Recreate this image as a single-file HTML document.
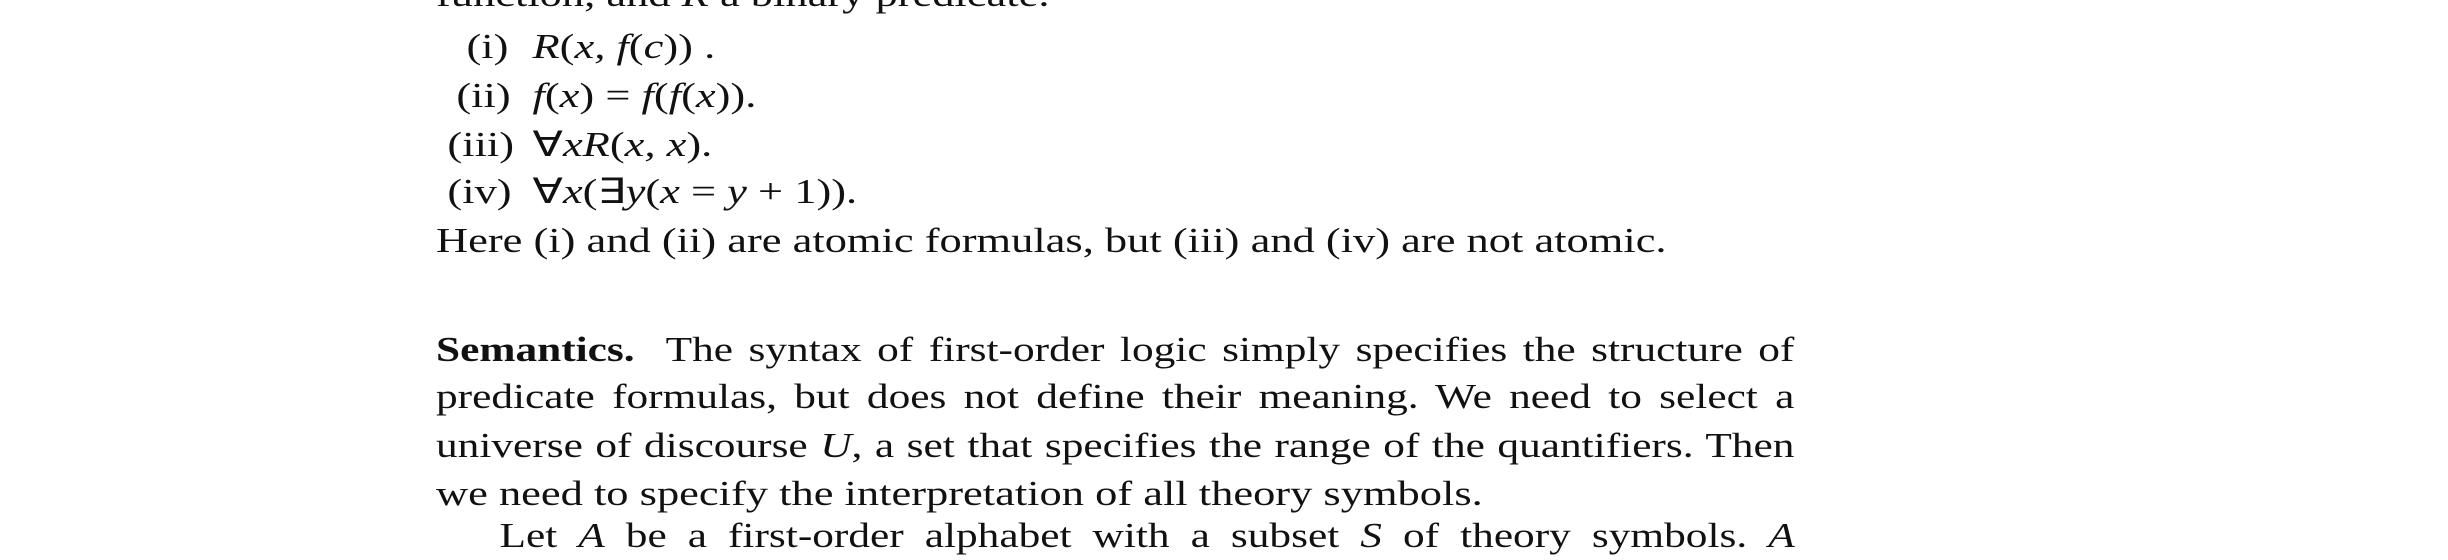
<!DOCTYPE html>
<html><head><meta charset="utf-8"><style>
body{margin:0;width:2448px;height:528px;overflow:hidden;background:#fff;position:relative;font-family:"Liberation Serif",serif;font-size:35px;color:#111}
#c{position:absolute;left:436px;top:0;width:1100px;height:528px;transform:scaleX(1.27);transform-origin:0 0}
.l{position:absolute;height:48px;line-height:48px;white-space:nowrap}
.j{text-align:justify;text-align-last:justify;transform:scaleX(0.975);transform-origin:0 0}
.f{position:absolute;left:76px;height:48px;line-height:48px;white-space:nowrap}
i{font-style:italic}
</style></head><body><div id="c">
<div class="l" style="top:-29px;left:0">function, and <i>R</i> a binary predicate.</div>
<div class="l" style="top:23px;left:24px">(i)</div><div class="f" style="top:23px"><i>R</i>(<i>x, f</i>(<i>c</i>)) .</div>
<div class="l" style="top:72px;left:16px">(ii)</div><div class="f" style="top:72px"><i>f</i>(<i>x</i>) = <i>f</i>(<i>f</i>(<i>x</i>)).</div>
<div class="l" style="top:121px;left:9px">(iii)</div><div class="f" style="top:121px">∀<i>xR</i>(<i>x, x</i>).</div>
<div class="l" style="top:168px;left:9px">(iv)</div><div class="f" style="top:168px">∀<i>x</i>(∃<i>y</i>(<i>x</i> = <i>y</i> + 1)).</div>
<div class="l" style="top:217px;left:0">Here (i) and (ii) are atomic formulas, but (iii) and (iv) are not atomic.</div>
<div class="l j" style="top:326px;left:0;width:1097px"><b>Semantics.</b> &nbsp;The syntax of first-order logic simply specifies the structure of</div>
<div class="l j" style="top:373px;left:0;width:1097px">predicate formulas, but does not define their meaning. We need to select a</div>
<div class="l j" style="top:422px;left:0;width:1097px">universe of discourse <i>U</i>, a set that specifies the range of the quantifiers. Then</div>
<div class="l" style="top:470px;left:0">we need to specify the interpretation of all theory symbols.</div>
<div class="l j" style="top:512px;left:50px;width:1046px">Let <i>A</i> be a first-order alphabet with a subset <i>S</i> of theory symbols. <i>A</i></div>
</div></body></html>
